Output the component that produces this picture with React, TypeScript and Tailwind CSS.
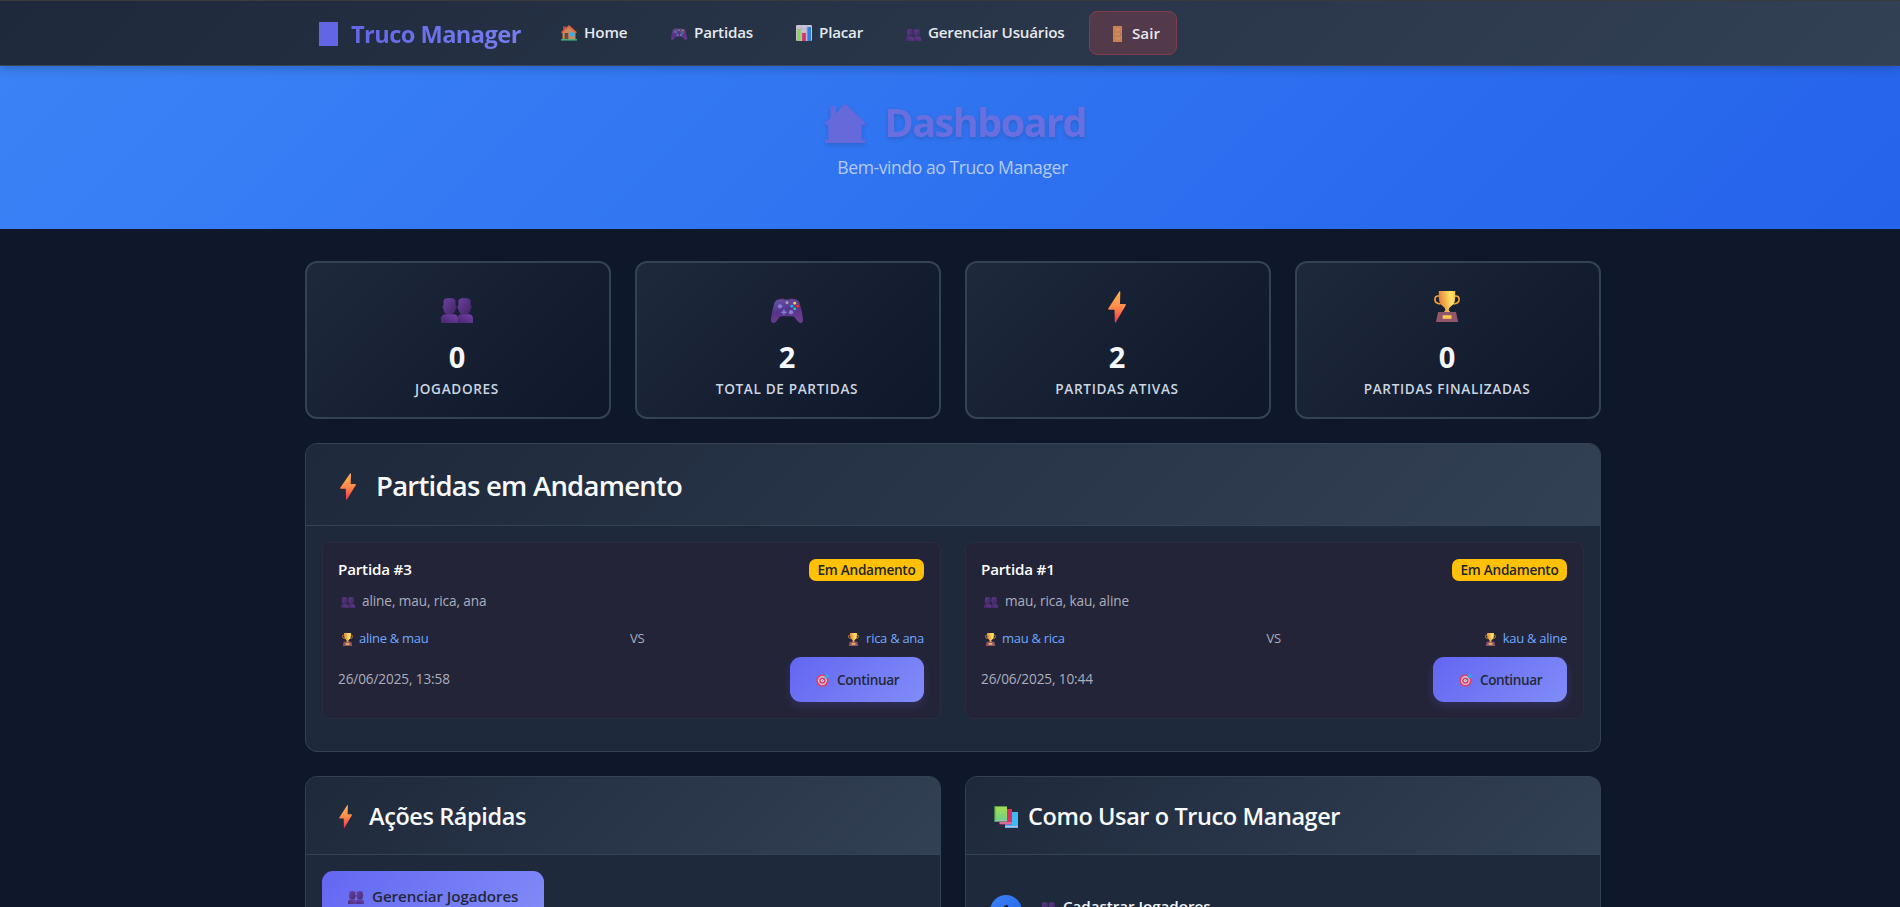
import React, { type ReactNode } from "react";

type IconProps = { className?: string };

function PeopleIcon({ className = "" }: IconProps) {
  return (
    <svg viewBox="0 0 32 30" preserveAspectRatio="none" className={className}>
      <defs>
        <linearGradient id="peopleHead" x1="0" y1="0" x2="1" y2="1">
          <stop offset="0" stopColor="#6b40a0" />
          <stop offset="1" stopColor="#432463" />
        </linearGradient>
        <linearGradient id="peopleBody" x1="1" y1="0" x2="0" y2="1">
          <stop offset="0" stopColor="#7442a8" />
          <stop offset="1" stopColor="#46256d" />
        </linearGradient>
      </defs>
      <g fill="url(#peopleHead)">
        <rect x="1.6" y="8.5" width="14" height="5" rx="2.2" />
        <rect x="16.6" y="8.5" width="14" height="5" rx="2.2" />
        <path d="M2.500 3.5Q2.700 0 8.500 0T14.600 3.500V13q0 7-6.100 7T2.500 13Z" />
        <path d="M17.400 3.500Q17.700 0 23.500 0T29.600 3.500V13q0 7-6.100 7T17.400 13Z" />
      </g>
      <g fill="url(#peopleBody)">
        <path d="M0 30V25q0-5.500 5-5.500h7.500Q17 19.500 17 25v5Z" />
        <path d="M16.600 30V25q0-5.500 4-5.500h7q4.400 0 4.400 5.500v5Z" />
      </g>
    </svg>
  );
}

function GamepadIcon({ className = "" }: IconProps) {
  return (
    <svg viewBox="0 0 32 26" preserveAspectRatio="none" className={className}>
      <defs>
        <linearGradient id="padBody" x1="0" y1="0" x2="0.3" y2="1">
          <stop offset="0" stopColor="#6559a6" />
          <stop offset="0.55" stopColor="#56338a" />
          <stop offset="1" stopColor="#6c3c91" />
        </linearGradient>
      </defs>
      <path d="M7 2q2-2.200 6-1.500v2H7ZM19 .5q4-.7 6 1.500v1h-6Z" fill="#6d1f58" />
      <path
        d="M8 1.500h16q3.500 0 4.700 4Q31.500 15 32 22q0 4-2.500 4-1.500 0-3-2l-3-4q-.8-1-2.500-1H11q-1.700 0-2.500 1l-3 4q-1.500 2-3 2Q0 26 0 22 .5 15 3.300 5.500 4.500 1.500 8 1.500Z"
        fill="url(#padBody)"
      />
      <g fill="#8080d4">
        <circle cx="9" cy="8.700" r="2.200" />
        <circle cx="20" cy="14.700" r="2.200" />
        <path d="M12.200 12h1.500v2h2v1.500h-2v2h-1.500v-2h-2V14h2Z" />
      </g>
      <circle cx="16" cy="5" r="1.500" fill="#a7a0b0" />
      <circle cx="23.700" cy="5.500" r="1.500" fill="#ffc34a" />
      <circle cx="26.700" cy="8.500" r="1.500" fill="#f8312f" />
      <circle cx="20.800" cy="8.500" r="1.500" fill="#26aef5" />
      <circle cx="23.700" cy="11.300" r="1.500" fill="#27d39a" />
    </svg>
  );
}

function BoltIcon({ className = "" }: IconProps) {
  return (
    <svg viewBox="0 0 18 32" preserveAspectRatio="none" className={className}>
      <defs>
        <linearGradient id="boltFill" x1="0" y1="0" x2="0" y2="1">
          <stop offset="0" stopColor="#ffb84b" />
          <stop offset="0.5" stopColor="#ff8b4a" />
          <stop offset="1" stopColor="#ee3550" />
        </linearGradient>
      </defs>
      <path d="M11.300.500q1-.9 1 .6L12 13h5q1.300 0 .8 1.200L8 31q-1 1.500-1.200-.2L6.500 18.700h-5.500Q-.2 18.700.4 17.300Z" fill="url(#boltFill)" />
    </svg>
  );
}

function TrophyIcon({ className = "" }: IconProps) {
  return (
    <svg viewBox="0 0 26 31" preserveAspectRatio="none" className={className}>
      <defs>
        <linearGradient id="cupFill" x1="0" y1="0.2" x2="1" y2="0">
          <stop offset="0" stopColor="#e8833b" />
          <stop offset="0.7" stopColor="#ffe566" />
          <stop offset="1" stopColor="#f8c044" />
        </linearGradient>
      </defs>
      <path d="M6 5H4.200Q.9 5 .9 8.500 1 12.500 6.500 13M20 5h1.800q3.300 0 3.300 3.500Q25 12.500 19.500 13" fill="none" stroke="#eda33c" strokeWidth="1.700" />
      <path d="M4.800 0h16.400v6q0 7-3.600 8.800Q14.600 17 14.600 19l2 2.500H9.400l2-2.500q0-2-3-4.200Q4.800 13 4.800 6Z" fill="url(#cupFill)" />
      <path d="M4 21h18l2.200 10H2Z" fill="#92566b" />
      <path d="M8.700 24.200h8.800v3.600H8.700Z" fill="#ffc850" />
    </svg>
  );
}

function HouseIcon({ className = "" }: IconProps) {
  return (
    <svg viewBox="0 0 16 16" className={className}>
      <path d="M2.200 1.400h2.600V6H2.200Z" fill="#b05a48" />
      <path d="M1.500 7 8 1.500 14.500 7v7.500h-13Z" fill="#c9895c" />
      <path d="M0 7.300 7.400.500q.6-.5 1.200 0L16 7.300l-1.200 1L8 2.200 1.200 8.300Z" fill="#e5603c" />
      <path d="M3.600 8h3.700v6.500H3.600Z" fill="#70453f" />
      <path d="M9 7.500h4.500v4H9Z" fill="#38abed" />
      <path d="M0 14.200h16V15.500H0Z" fill="#3fc487" />
    </svg>
  );
}

function ChartIcon({ className = "" }: IconProps) {
  return (
    <svg viewBox="0 0 16 16" className={className}>
      <rect width="16" height="16" rx="1.200" fill="#cbc2d6" />
      <path d="M0 4h16M0 8h16M0 12h16M5.300 0v16M10.700 0v16" stroke="#aaa1b8" strokeWidth=".5" />
      <rect x="1" y="4" width="3.600" height="12" fill="#86d65c" />
      <rect x="6.200" y="8" width="3.600" height="8" fill="#d5306a" />
      <rect x="11.400" y="2" width="3.600" height="14" fill="#2f80d8" />
    </svg>
  );
}

function DoorIcon({ className = "" }: IconProps) {
  return (
    <svg viewBox="0 0 9 16" className={className}>
      <rect width="9" height="16" rx=".5" fill="#c98355" />
      <path d="M1.500 2h6v3h-6ZM1.500 6.500h6v3h-6ZM1.500 11h6v3h-6Z" fill="#d18d5c" stroke="#b57548" strokeWidth=".4" />
      <circle cx="7.500" cy="8.500" r=".7" fill="#9c6478" />
    </svg>
  );
}

function TargetIcon({ className = "" }: IconProps) {
  return (
    <svg viewBox="0 0 14 14" className={className}>
      <circle cx="6.400" cy="7.600" r="6.200" fill="#dc4169" />
      <circle cx="6.400" cy="7.600" r="4.500" fill="#dcc7da" />
      <circle cx="6.400" cy="7.600" r="3.200" fill="#dc4169" />
      <circle cx="6.400" cy="7.600" r="1.700" fill="#dcc7da" />
      <path d="m6.400 7.600 4-4" stroke="#4a7fc0" strokeWidth="1" />
      <path d="M8.800 3 11.200 0l.6 2 2.200.5-2.600 2.800-2.400-.2Z" fill="#37a5e4" />
    </svg>
  );
}

function BooksIcon({ className = "" }: IconProps) {
  return (
    <svg viewBox="0 0 24 22" className={className}>
      <defs>
        <linearGradient id="bookGreen" x1="0" y1="0" x2="0" y2="1">
          <stop offset="0" stopColor="#a4dd4f" />
          <stop offset="1" stopColor="#6fd286" />
        </linearGradient>
      </defs>
      <path d="M11 6h13v16H11Z" fill="#3fb9f5" />
      <path d="M11 20h13v1.200H11Z" fill="#c9b7ea" />
      <path d="M5.500 3H18v15.500H5.500Z" fill="#df2c62" />
      <path d="M5.500 16.600H18v1H5.500Z" fill="#dba4cd" />
      <path d="M0 0h13v16H0Z" fill="#44824e" />
      <path d="M1.300.8H13V14H1.300Z" fill="url(#bookGreen)" />
      <path d="M1 14.300h12v1H1Z" fill="#c3cbe0" />
    </svg>
  );
}

const navLinks = [
  { label: "Home", icon: <HouseIcon className="h-4 w-4" />, width: "w-[44px] tracking-[-0.1px]" },
  { label: "Partidas", icon: <GamepadIcon className="mt-[2px] h-[12px] w-4 opacity-90" />, width: "w-[59px] tracking-[-0.2px]" },
  { label: "Placar", icon: <ChartIcon className="h-4 w-4" />, width: "w-[44px] tracking-[-0.2px]" },
  { label: "Gerenciar Usuários", icon: <PeopleIcon className="mt-[4px] h-[12px] w-[15px] opacity-80" />, width: "w-[137px] tracking-[-0.22px]" },
];

function Navbar() {
  return (
    <nav className="relative flex h-[66px] items-center border-y border-t-[#3a3a3c] border-b-[#3d4654] bg-linear-135 from-[#1e293b] to-[#334155] pl-[319px] text-[15.2px] font-semibold whitespace-nowrap text-[#e5e8ec] shadow-[0_2px_10px_rgba(0,0,0,0.22)]">
      <div className="mt-[2px] flex items-center">
        <span className="h-[24px] w-[19px] bg-[#6366e4]" />
        <span className="ml-[13px] w-[170px] bg-linear-to-r from-[#6366e8] to-[#767ef0] bg-clip-text text-[23.6px] leading-8 font-bold tracking-[-0.55px] text-transparent">
          Truco Manager
        </span>
      </div>
      <div className="ml-[40px] flex items-center gap-[43px]">
        {navLinks.map((link) => (
          <a key={link.label} className="flex items-center gap-[7px]">
            {link.icon}
            <span className={`-mt-[3px] leading-6 ${link.width}`}>{link.label}</span>
          </a>
        ))}
      </div>
      <button className="ml-[24px] flex h-[44px] w-[88px] items-center rounded-lg border border-[#813c4c] bg-[#523a4a] pl-[23px]">
        <DoorIcon className="mt-[2px] h-4 w-[9px]" />
        <span className="ml-[10px]">Sair</span>
      </button>
    </nav>
  );
}

function Hero() {
  return (
    <header className="flex h-[163px] flex-col items-center bg-linear-135 from-[#3b82f6] to-[#2563eb] pt-[32px] pl-[9px]">
      <h1 className="flex items-center gap-[20px] text-[#6a6fe0] drop-shadow-[0_2px_2px_rgba(0,0,0,0.14)]">
        <svg viewBox="0 0 40 39" className="mt-[3px] h-[39px] w-[40px] fill-[#6669da]">
          <path d="M5.500 2H11v7.500L18.500 1q1.500-1.500 3 0L40 18.500v2.200h-3.300V35.500H40V39H0v-3.500h3.300V20.700H0v-2L5.500 14Z" />
        </svg>
        <span className="w-[200px] text-[39.500px] leading-[48px] font-bold tracking-[-1.500px]">Dashboard</span>
      </h1>
      <p className="mt-[7px] mr-[4px] text-[17.6px] leading-7 tracking-[-0.45px] text-[#b3cafa]">Bem-vindo ao Truco Manager</p>
    </header>
  );
}

const stats = [
  { value: 0, label: "Jogadores", icon: <PeopleIcon className="h-[25px] w-8" /> },
  { value: 2, label: "Total de Partidas", icon: <GamepadIcon className="h-[25px] w-8" /> },
  { value: 2, label: "Partidas Ativas", icon: <BoltIcon className="h-8 w-[18px]" /> },
  { value: 0, label: "Partidas Finalizadas", icon: <TrophyIcon className="mb-px h-[31px] w-[26px]" /> },
];

function StatCard({ value, label, icon }: { value: number; label: string; icon: ReactNode }) {
  return (
    <div className="flex h-[158px] flex-col items-center rounded-xl border-2 border-[#324353] bg-linear-135 from-[#1e293b] to-[#0f172a] pt-[28px] pr-[2px]">
      <div className="flex h-8 items-end">{icon}</div>
      <div className="mt-4 text-[29px] leading-[35px] font-bold text-[#f4f7fb]">{value}</div>
      <div className="mt-[5px] text-[13.6px] leading-5 font-semibold tracking-[0.65px] text-[#cbd5e1] uppercase">{label}</div>
    </div>
  );
}

function MatchCard({ id, players, teamA, teamB, date }: { id: number; players: string; teamA: string; teamB: string; date: string }) {
  return (
    <article className="rounded-lg border border-[#2a2c43] bg-[#242438] p-4 text-[13.6px] text-[#a9afbd]">
      <div className="flex h-[22px] items-center justify-between">
        <h3 className="-mt-[2px] -ml-px text-[15.2px] font-semibold tracking-[-0.2px] text-white">Partida #{id}</h3>
        <span className="w-[115px] rounded-[7px] bg-[#ffc107] text-center leading-[22px] font-semibold tracking-[-0.27px] text-[#212529]">
          Em Andamento
        </span>
      </div>
      <div className="mt-[10px] flex h-5 items-center gap-[7px] pl-[2px]">
        <PeopleIcon className="mt-[2px] h-[11px] w-[14px] opacity-80" />
        <span className="tracking-[-0.1px]">{players}</span>
      </div>
      <div className="mt-[18px] flex h-5 items-center justify-between text-[13px] tracking-[-0.28px]">
        <span className="flex items-center gap-[6px] pl-[3px] text-[#6ea8fe]">
          <TrophyIcon className="h-[13px] w-[11px]" />
          {teamA}
        </span>
        <span className="-translate-x-px">VS</span>
        <span className="flex items-center gap-[7px] text-[#6ea8fe]">
          <TrophyIcon className="h-[13px] w-[11px]" />
          {teamB}
        </span>
      </div>
      <div className="mt-[8px] flex h-[45px] items-center justify-between">
        <span className="-ml-px tracking-[-0.12px]">{date}</span>
        <button className="flex h-[45px] w-[134px] items-center rounded-[11px] bg-linear-135 from-[#6366f1] to-[#818cf8] pl-[26px] font-semibold tracking-[-0.4px] text-[#25283a] shadow-[0_4px_8px_rgba(99,102,241,0.2)]">
          <TargetIcon className="mt-px h-[14px] w-[14px]" />
          <span className="mt-[2px] ml-[7px]">Continuar</span>
        </button>
      </div>
    </article>
  );
}

function Panel({ className, header, children }: { className: string; header: ReactNode; children: ReactNode }) {
  return (
    <section className={`overflow-hidden rounded-xl border border-[#324353] bg-[#1e293b] ${className}`}>
      <div className="border-b border-[#324353] bg-linear-135 from-[#1e293b] to-[#334155] font-semibold whitespace-nowrap text-[#f8fafc]">{header}</div>
      {children}
    </section>
  );
}

export default function App() {
  return (
    <div className="h-screen overflow-hidden bg-[#0f172a] font-['Open_Sans','Noto_Sans',sans-serif]">
      <Navbar />
      <Hero />
      <main className="ml-[305px] w-[1296px] pt-8">
        <div className="grid grid-cols-4 gap-6">
          {stats.map((s) => (
            <StatCard key={s.label} {...s} />
          ))}
        </div>

        <Panel
          className="mt-6 h-[309px]"
          header={
            <h2 className="flex h-[81px] items-center pl-[34px] text-[27.5px] tracking-[-0.76px]">
              <BoltIcon className="mt-[3px] h-[27px] w-4" />
              <span className="mt-[2px] ml-[20px]">Partidas em Andamento</span>
            </h2>
          }
        >
          <div className="grid grid-cols-2 gap-6 p-4">
            <MatchCard id={3} players="aline, mau, rica, ana" teamA="aline & mau" teamB="rica & ana" date="26/06/2025, 13:58" />
            <MatchCard id={1} players="mau, rica, kau, aline" teamA="mau & rica" teamB="kau & aline" date="26/06/2025, 10:44" />
          </div>
        </Panel>

        <div className="mt-6 grid grid-cols-2 gap-6">
          <Panel
            className="h-[320px]"
            header={
              <h2 className="flex h-[77px] items-center pl-[33px] text-[23.5px] tracking-[-0.4px]">
                <BoltIcon className="mt-[2px] h-[23px] w-[13px]" />
                <span className="mt-[2px] ml-[17px]">Ações Rápidas</span>
              </h2>
            }
          >
            <div className="p-4">
              <button className="flex h-[50px] w-[222px] items-center rounded-[11px] bg-linear-135 from-[#6366f1] to-[#818cf8] pl-[26px] text-[15.2px] font-semibold tracking-[-0.1px] text-[#25283a]">
                <PeopleIcon className="mt-[3px] h-[13px] w-4 opacity-90" />
                <span className="mt-px ml-2">Gerenciar Jogadores</span>
              </button>
            </div>
          </Panel>
          <Panel
            className="h-[320px]"
            header={
              <h2 className="flex h-[77px] items-center pl-[28px] text-[23.5px] tracking-[-0.41px]">
                <BooksIcon className="mt-[2px] h-[22px] w-6" />
                <span className="mt-[2px] ml-[10px]">Como Usar o Truco Manager</span>
              </h2>
            }
          >
            <div className="flex pt-[40px] pl-[24px]">
              <span className="h-8 w-8 rounded-full bg-linear-135 from-[#3b82f6] to-[#2563eb] text-center text-sm leading-[30px] font-bold text-[#0f172a]">1</span>
              <div className="ml-[19px] flex h-[21px] items-center text-[15.2px] font-semibold tracking-[-0.05px] text-[#f1f5f9]">
                <PeopleIcon className="mt-[4px] h-[12px] w-[15px] opacity-80" />
                <span className="mt-px ml-[7px]">Cadastrar Jogadores</span>
              </div>
            </div>
          </Panel>
        </div>
      </main>
    </div>
  );
}
